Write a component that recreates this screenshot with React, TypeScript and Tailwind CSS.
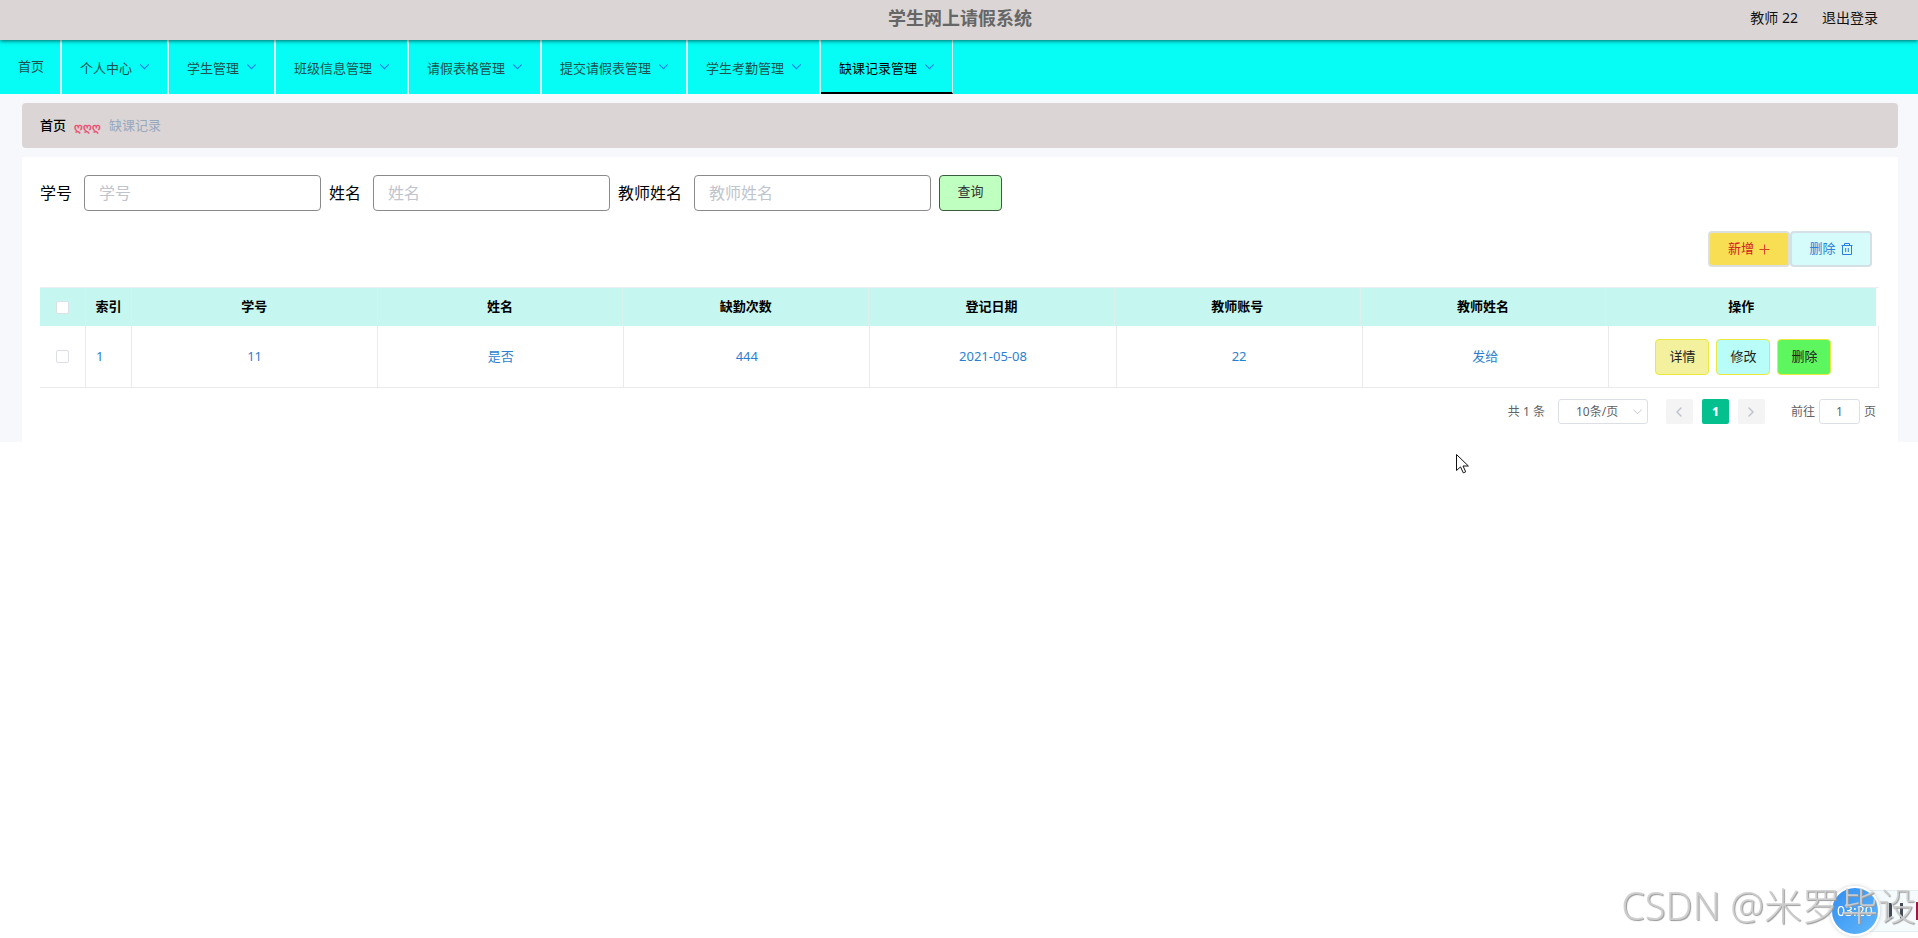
import { ReactNode } from "react";

const menus = ["个人中心", "学生管理", "班级信息管理", "请假表格管理", "提交请假表管理", "学生考勤管理", "缺课记录管理"];

const filters = [
  { id: "xuehao", label: "学号" },
  { id: "xingming", label: "姓名" },
  { id: "jiaoshixingming", label: "教师姓名" },
];

const columns = ["学号", "姓名", "缺勤次数", "登记日期", "教师账号", "教师姓名"];

const rows = [["11", "是否", "444", "2021-05-08", "22", "发给"]];

const gridCols = "grid grid-cols-[46px_46px_repeat(6,minmax(0,246fr))_minmax(0,270fr)]";

function Chevron({ className, d }: { className: string; d: string }) {
  return (
    <svg viewBox="0 0 10 10" fill="none" stroke="currentColor" strokeLinecap="round" className={className}>
      <path d={d} />
    </svg>
  );
}

function TopBar() {
  return (
    <header className="relative z-10 flex h-10 items-center bg-[#dbd5d5] px-10 pb-1 shadow-[0_1px_4px_rgba(0,0,0,0.6)]">
      <div className="flex-1" />
      <h1 className="pl-[2px] text-[18px] font-bold text-[#666]">学生网上请假系统</h1>
      <div className="flex flex-1 justify-end gap-6 text-sm text-[#111]">
        <span>教师 22</span>
        <button type="button">退出登录</button>
      </div>
    </header>
  );
}

function NavBar() {
  return (
    <nav className="flex h-[54px] bg-[#05fdf6] text-[13px] text-[#1f4f4f]">
      <a href="#home" className="flex items-center border-r-2 border-[#dff5f5] pr-4 pl-[18px]">
        首页
      </a>
      {menus.map((name, i) => {
        const active = i === menus.length - 1;
        return (
          <button
            key={name}
            type="button"
            className={
              active
                ? "flex items-center gap-2 border-r border-b-2 border-r-[#dff5f5] border-b-black px-[18px] pt-[5px] text-black"
                : "flex items-center gap-2 border-r-2 border-[#dff5f5] px-[18px] pt-[3px]"
            }
          >
            {name}
            <Chevron className="mb-1 w-[9px] stroke-[1.2] text-[#1c7ce8]" d="M0.5 3l4.5 4.5 4.5-4.5" />
          </button>
        );
      })}
    </nav>
  );
}

function Breadcrumb() {
  return (
    <div className="flex h-[45px] items-center gap-2 rounded bg-[#dbd5d5] px-[18px] text-[13px]">
      <a href="#home" className="font-medium text-black">首页</a>
      <span className="pt-1 text-[11px] font-bold text-[#ee4f73]">ღღღ</span>
      <span className="text-[#97a8be]">缺课记录</span>
    </div>
  );
}

function SearchForm() {
  return (
    <form className="flex items-center gap-2">
      {filters.map((f) => (
        <div key={f.id} className="flex items-center gap-3">
          <label htmlFor={f.id} className="text-base text-black">{f.label}</label>
          <input
            id={f.id}
            placeholder={f.label}
            className="h-9 w-[237px] rounded border border-[#8a8a8a] px-[14px] text-base placeholder:text-[#c0c4cc]"
          />
        </div>
      ))}
      <button type="button" className="h-9 w-[63px] rounded border border-[#3c5c40] bg-[#bfffc0] pb-[2px] text-[13px] text-[#333]">
        查询
      </button>
    </form>
  );
}

function Toolbar() {
  return (
    <div className="mt-5 flex justify-end pr-[7px]">
      <button type="button" className="flex h-9 w-[82px] items-center justify-center gap-[5px] rounded border-2 border-[#dcdfe0] bg-[#f8de53] text-[13px] text-[#d3201c]">
        新增
        <svg viewBox="0 0 11 11" fill="none" stroke="currentColor" className="w-[11px] opacity-80">
          <path d="M5.5 0.5v10M0.5 5.5h10" />
        </svg>
      </button>
      <button type="button" className="flex h-9 w-[82px] items-center justify-center gap-[5px] rounded border-2 border-[#d5dfe6] bg-[#d5fbfa] text-[13px] text-[#2a80d8]">
        删除
        <svg viewBox="0 0 12 12" fill="none" stroke="currentColor" className="w-3">
          <path d="M0.5 2.5h11M3.5 2.5v-2h5v2M1.5 2.5v9h9v-9M4.7 5v4M7.3 5v4" />
        </svg>
      </button>
    </div>
  );
}

function HeadCell({ children }: { children: ReactNode }) {
  return (
    <th scope="col" className="flex items-center justify-center border-r border-[#dcf0ee] font-bold last:border-r-0">
      {children}
    </th>
  );
}

function ActionButton({ color, children }: { color: string; children: ReactNode }) {
  return (
    <button type="button" className={`h-9 w-[54px] rounded border border-[#ebe93c] text-[13px] text-[#222] ${color}`}>
      {children}
    </button>
  );
}

function DataTable() {
  const checkbox = "h-[13px] w-[13px] appearance-none rounded-[2px] border border-[#dcdfe6] bg-white";
  return (
    <table className="mt-5 block border-t border-[#ebeef5] text-[13px]">
      <thead className="block">
        <tr className={`${gridCols} mr-[3px] h-[38px] bg-[#c6f6f0] text-black`}>
          <HeadCell>
            <input type="checkbox" aria-label="全选" className={checkbox} />
          </HeadCell>
          <HeadCell>索引</HeadCell>
          {columns.map((c) => (
            <HeadCell key={c}>{c}</HeadCell>
          ))}
          <HeadCell>操作</HeadCell>
        </tr>
      </thead>
      <tbody className="block">
        {rows.map((row, i) => (
          <tr key={i} className={`${gridCols} h-[62px] border-b border-[#e8eaec] text-[#2b7fd0]`}>
            <td className="flex items-center justify-center border-r border-[#e8eaec]">
              <input type="checkbox" aria-label={`选择第${i + 1}行`} className={checkbox} />
            </td>
            <td className="flex items-center border-r border-[#e8eaec] px-[10px]">{i + 1}</td>
            {row.map((cell, j) => (
              <td key={j} className="flex items-center justify-center border-r border-[#e8eaec]">{cell}</td>
            ))}
            <td className="flex items-center justify-center gap-[7px] border-r border-[#e8eaec]">
              <ActionButton color="bg-[#f3f19e]">详情</ActionButton>
              <ActionButton color="bg-[#b8fdf7]">修改</ActionButton>
              <ActionButton color="bg-[#5df65f]">删除</ActionButton>
            </td>
          </tr>
        ))}
      </tbody>
    </table>
  );
}

function Pagination() {
  return (
    <div className="mt-[11px] flex items-center justify-end pr-[3px] text-xs text-[#606266]">
      <span>共 1 条</span>
      <div className="relative ml-[13px]">
        <select aria-label="每页条数" className="block h-[25px] w-[90px] appearance-none rounded-[3px] border border-[#dcdfe6] bg-white pl-[17px] text-xs">
          <option>10条/页</option>
        </select>
        <Chevron className="pointer-events-none absolute top-2 right-[6px] w-[9px] text-[#c0c4cc]" d="M0.5 3l4.5 4.5 4.5-4.5" />
      </div>
      <div className="mx-[18px] flex gap-[9px]">
        <button type="button" aria-label="上一页" className="flex h-[25px] w-[27px] items-center justify-center rounded-[2px] bg-[#f4f4f5] text-[#c0c4cc]">
          <Chevron className="w-[10px] stroke-[1.5]" d="M7 1L3 5l4 4" />
        </button>
        <button type="button" className="h-[25px] w-[27px] rounded-[2px] bg-[#04c08f] font-extrabold text-white">1</button>
        <button type="button" aria-label="下一页" className="flex h-[25px] w-[27px] items-center justify-center rounded-[2px] bg-[#f4f4f5] text-[#c0c4cc]">
          <Chevron className="w-[10px] stroke-[1.5]" d="M3 1l4 4-4 4" />
        </button>
      </div>
      <label htmlFor="page" className="ml-2">前往</label>
      <input id="page" defaultValue="1" className="mx-1 h-[25px] w-[41px] rounded-[3px] border border-[#dcdfe6] text-center text-xs" />
      <span>页</span>
    </div>
  );
}

function Recorder() {
  return (
    <div className="fixed right-0 bottom-0 flex h-[54px] items-center">
      <div className="absolute right-0 h-[42px] w-[63px] border-y border-[#e4eef2] bg-[#f5fafc]" />
      <div className="relative mr-[9px] flex h-[50px] w-[50px] items-center justify-center rounded-full border-2 border-white bg-gradient-to-br from-[#2f8df0] to-[#62b8fb] text-sm text-white shadow-[0_0_4px_rgba(0,0,0,0.2)]">
        03:20
      </div>
      <div className="relative flex w-[29px] items-center justify-between">
        <div className="h-4 w-[14px] border-x-[3px] border-[#444a55]" />
        <div className="h-[18px] w-[2px] bg-[#a01840]" />
      </div>
    </div>
  );
}

export default function App() {
  return (
    <div className="min-h-screen bg-white font-['Noto_Sans','Noto_Sans_CJK_SC',sans-serif]">
      <TopBar />
      <NavBar />
      <main className="bg-[#f6f8fb] pt-[9px] pr-5 pl-[22px]">
        <Breadcrumb />
        <section className="mt-[9px] bg-white pt-[18px] pr-[19px] pb-[18px] pl-[18px]">
          <SearchForm />
          <Toolbar />
          <DataTable />
          <Pagination />
        </section>
      </main>
      <Recorder />
      <div className="pointer-events-none fixed right-[2px] bottom-2 text-[38px] leading-[50px] font-light whitespace-nowrap text-[#cfcfcf]/90 [text-shadow:1px_1px_1px_#9a9a9a]">
        CSDN @米罗毕设
      </div>
      <svg viewBox="0 0 13 20" className="pointer-events-none fixed top-[454px] left-[1456px] w-[13px]">
        <path d="M0.5 0.5v16l4-3.6 2.8 6 2.4-1.1-2.7-5.8h5.4z" fill="#fff" stroke="#111" />
      </svg>
    </div>
  );
}
